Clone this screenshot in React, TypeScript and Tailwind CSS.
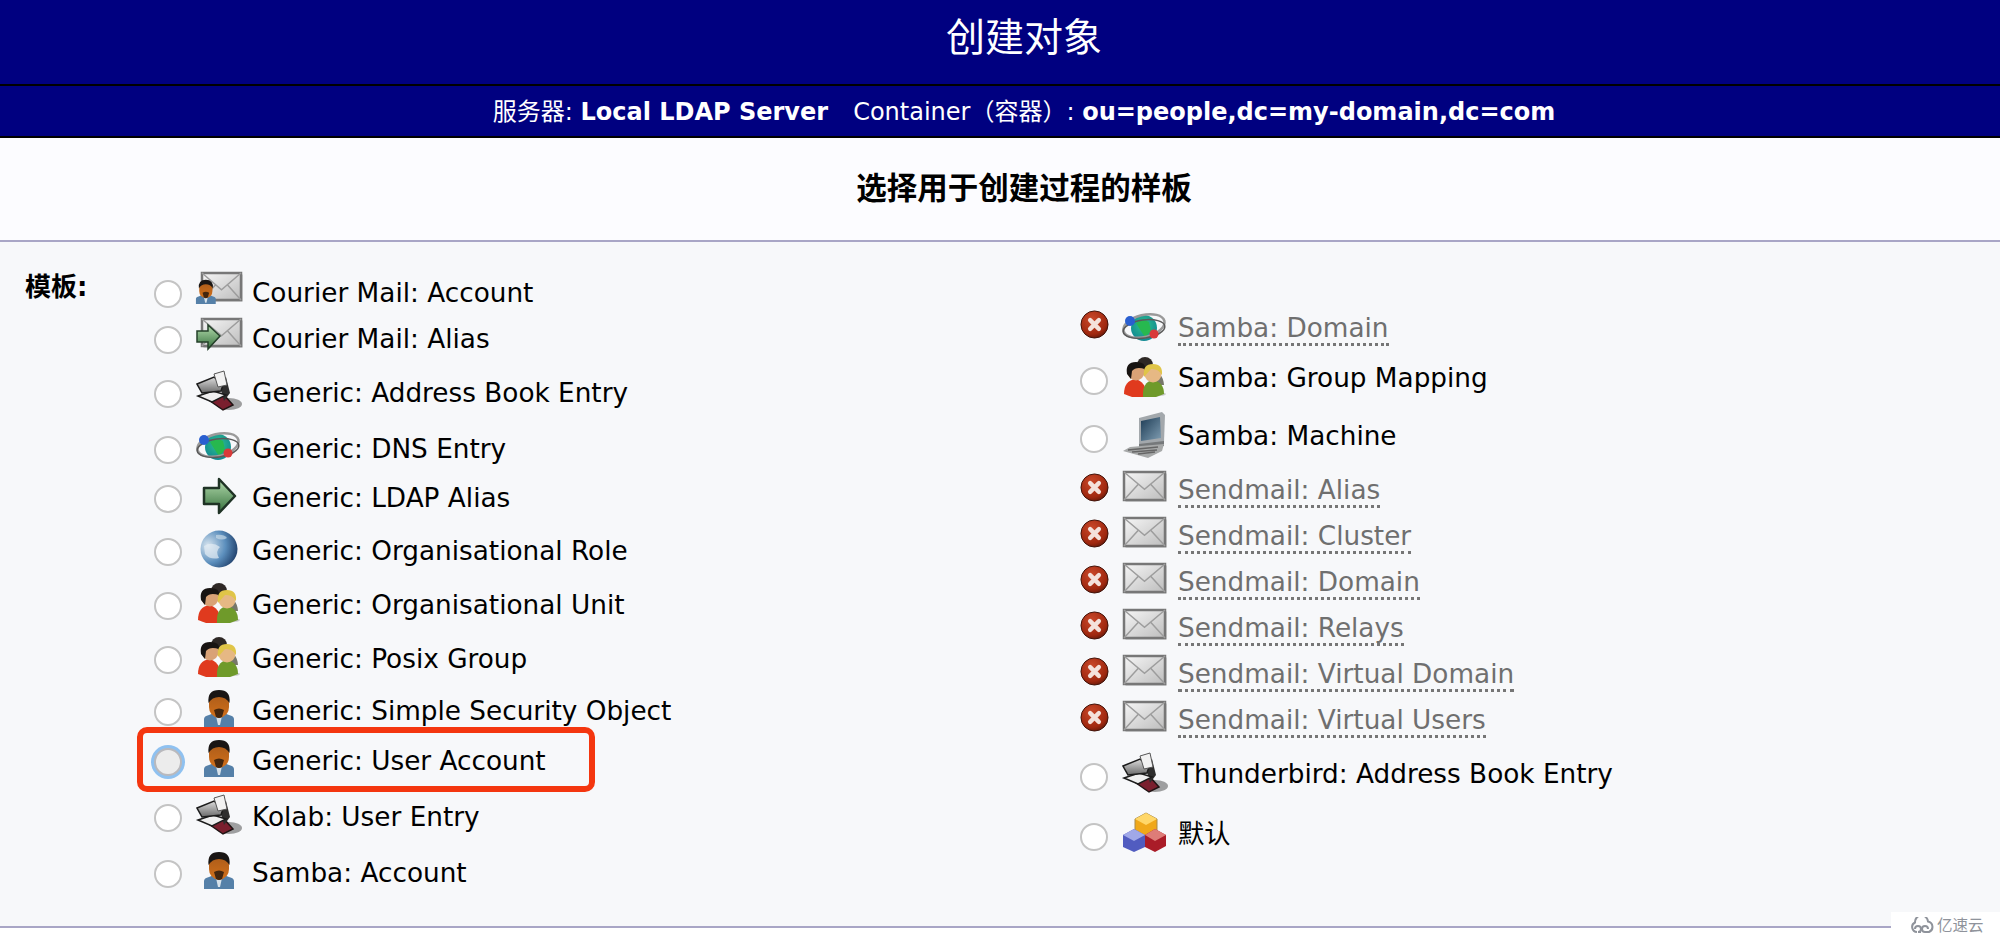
import type React from "react"

const cjk = "font-['Noto_Sans_CJK_SC',sans-serif]"

function SvgDefs() {
  return (
    <svg className="absolute h-0 w-0" aria-hidden="true">
      <defs>
        <linearGradient id="mailFill" x1="0" y1="0" x2="1" y2="1">
          <stop offset="0" stopColor="#f6f6f6" />
          <stop offset="1" stopColor="#bdbdbd" />
        </linearGradient>
        <linearGradient id="arrowFill" x1="0" y1="0" x2="0" y2="1">
          <stop offset="0" stopColor="#b4dcae" />
          <stop offset="1" stopColor="#35703c" />
        </linearGradient>
        <radialGradient id="errFill" cx="0.4" cy="0.3" r="0.8">
          <stop offset="0" stopColor="#c9482a" />
          <stop offset="0.7" stopColor="#a0280f" />
          <stop offset="1" stopColor="#4f1509" />
        </radialGradient>
        <radialGradient id="earthFill" cx="0.2" cy="0.4" r="0.95">
          <stop offset="0" stopColor="#d5e3ee" />
          <stop offset="0.5" stopColor="#5c8fbd" />
          <stop offset="1" stopColor="#0c2650" />
        </radialGradient>
        <radialGradient id="netFill" cx="0.5" cy="0.4" r="0.7">
          <stop offset="0" stopColor="#2fc48a" />
          <stop offset="1" stopColor="#0c7f95" />
        </radialGradient>
        <linearGradient id="faceFill" x1="0" y1="0" x2="0" y2="1">
          <stop offset="0" stopColor="#a85a1a" />
          <stop offset="1" stopColor="#d2701a" />
        </linearGradient>
        <linearGradient id="screenFill" x1="0" y1="0" x2="1" y2="1">
          <stop offset="0" stopColor="#1e3c55" />
          <stop offset="1" stopColor="#7f9db2" />
        </linearGradient>
        <linearGradient id="trayFill" x1="0" y1="0" x2="0" y2="1">
          <stop offset="0" stopColor="#dcdcdc" />
          <stop offset="1" stopColor="#6a6a6a" />
        </linearGradient>
      </defs>
    </svg>
  )
}

function Envelope({ x, y, w, h }: { x: number; y: number; w: number; h: number }) {
  return (
    <g>
      <rect x={x + 1.5} y={y + 1.5} width={w} height={h} fill="#8a8a8a" opacity="0.7" />
      <rect x={x} y={y} width={w} height={h} fill="url(#mailFill)" stroke="#777" strokeWidth="2.5" />
      <path
        d={`M${x} ${y} L${x + w / 2} ${y + h * 0.62} L${x + w} ${y} M${x} ${y + h} L${x + w * 0.36} ${y + h * 0.42} M${x + w} ${y + h} L${x + w * 0.64} ${y + h * 0.42}`}
        fill="none"
        stroke="#9d9d9d"
        strokeWidth="1.5"
      />
    </g>
  )
}

function Person({ scale = 1, dx = 0, dy = 0 }: { scale?: number; dx?: number; dy?: number }) {
  return (
    <g transform={`translate(${dx} ${dy}) scale(${scale})`}>
      <path d="M9 38 V30 Q9 27 14 26 L19 24 H29 L34 26 Q39 27 39 30 V38 Z" fill="#5580a8" />
      <path d="M21 27 H27 L25 36 H23 Z" fill="#d8e2ea" />
      <path d="M14 13 Q14 3 24 3 Q34 3 34 13 V18 Q34 27 24 29 Q14 27 14 18 Z" fill="url(#faceFill)" />
      <path d="M13.5 14 Q12 1 24 1 Q36 1 34.5 14 Q31 8 24 8 Q17 8 13.5 14 Z" fill="#1a1614" />
      <path d="M19 21 Q24 18 29 21 L27 28 Q24 30 21 28 Z" fill="#43260f" />
    </g>
  )
}

function Shape({ children, tall }: { children: React.ReactNode; tall?: boolean }) {
  return (
    <svg
      viewBox={tall ? "0 -3 48 46" : "0 0 48 40"}
      className={tall ? "-my-[3px] h-[46px] w-12 overflow-visible blur-[0.5px]" : "h-10 w-12 overflow-visible blur-[0.5px]"}
    >
      {children}
    </svg>
  )
}

function MailIcon() {
  return (
    <Shape>
      <Envelope x={2} y={3} w={41} h={28} />
    </Shape>
  )
}

function MailPersonIcon() {
  return (
    <Shape>
      <Envelope x={6} y={2} w={39} h={27} />
      <Person scale={0.66} dx={-6} dy={8} />
    </Shape>
  )
}

function MailArrowIcon() {
  return (
    <Shape>
      <Envelope x={6} y={2} w={39} h={27} />
      <path d="M1 14 H12 V8 L24 19 L12 32 V25 H1 Z" fill="url(#arrowFill)" stroke="#24402a" strokeWidth="1.5" />
    </Shape>
  )
}

function PersonIcon() {
  return (
    <Shape>
      <Person dx={-1} />
    </Shape>
  )
}

function ArrowIcon() {
  return (
    <Shape>
      <path d="M8 12 H23 V3 L39 20 L23 37 V28 H8 Z" fill="url(#arrowFill)" stroke="#1f3325" strokeWidth="2.5" strokeLinejoin="round" />
    </Shape>
  )
}

function BookIcon() {
  return (
    <Shape>
      <ellipse cx="33" cy="33" rx="13" ry="6" fill="#555" opacity="0.55" />
      <path d="M14 30 L28 24 L37 34 L27 39 Z" fill="#7a1f2e" stroke="#201414" strokeWidth="1.5" />
      <path d="M22 8 L30 6 L34 22 L28 30 Z" fill="#2e2e2e" />
      <path d="M2 25 L17 20 L30 24 L16 31 Z" fill="#efefef" stroke="#1c1c1c" strokeWidth="1.5" />
      <path d="M1 13 L18 6 L27 14 L25 20 L6 22 Z" fill="url(#trayFill)" stroke="#1c1c1c" strokeWidth="1.5" />
      <path d="M18 3 L28 0 L31 14 L22 16 Z" fill="#f2f2f2" stroke="#555" />
    </Shape>
  )
}

function NetIcon() {
  return (
    <Shape>
      <circle cx="22" cy="20" r="13" fill="url(#netFill)" />
      <path d="M14 15 Q21 10 27 14 L29 23 L23 29 L19 23 Z" fill="#27b84f" />
      <ellipse cx="22" cy="18" rx="21" ry="11" fill="none" stroke="#9a9a9a" strokeWidth="2.5" transform="rotate(-14 22 18)" />
      <ellipse cx="22" cy="21" rx="21" ry="9" fill="none" stroke="#5a5a5a" strokeWidth="1.5" transform="rotate(-8 22 21)" />
      <circle cx="8" cy="13" r="5" fill="#2a5fd0" />
      <circle cx="32" cy="26" r="4.5" fill="#d93a3a" />
    </Shape>
  )
}

function GlobeIcon() {
  return (
    <Shape>
      <circle cx="23" cy="20" r="18.5" fill="url(#earthFill)" />
      <path d="M8 17 Q16 12 24 18 Q19 22 23 29 Q14 31 9 25 Z" fill="#e4edf4" opacity="0.7" />
      <path d="M20 6 Q28 5 31 9 Q26 12 20 9 Z" fill="#c6d8e6" opacity="0.7" />
    </Shape>
  )
}

function GroupIcon() {
  return (
    <Shape>
      <ellipse cx="24" cy="37" rx="20" ry="3" fill="#888" opacity="0.4" />
      <path d="M27 12 Q41 14 42 28 H28 Z" fill="#77776a" />
      <circle cx="23" cy="8" r="8" fill="#2e2825" />
      <path d="M2 37 Q2 24 13 22 Q24 24 25 40 L10 40 Z" fill="#e03a1e" />
      <circle cx="14" cy="15" r="8.5" fill="#d9a276" />
      <path d="M5 17 Q3 5 14 5 Q24 5 23 12 Q14 9 10 14 L9 22 Z" fill="#181412" />
      <path d="M21 40 Q20 25 31 23 Q42 25 42 37 L34 40 Z" fill="#6f9a2a" />
      <circle cx="31" cy="17" r="8.5" fill="#e6b884" />
      <path d="M22 20 Q20 7 31 7 Q41 7 40 18 Q36 11 29 12 Z" fill="#e0c548" />
    </Shape>
  )
}

function ComputerIcon() {
  return (
    <Shape tall>
      <path d="M17 3 L40 -3 L43 0 L42 27 L17 30 Z" fill="#a3a8ac" />
      <path d="M19 6 L38 2 L39 23 L19 26 Z" fill="url(#screenFill)" />
      <path d="M17 29 L42 26 L42 31 L17 34 Z" fill="#76797b" />
      <path d="M8 32 L42 29 L40 36 L26 43 L1 36 Z" fill="#a7a9a9" />
      <path d="M6 35 L36 32 M10 37 L35 35 M16 39 L33 37" stroke="#666" strokeWidth="1.5" />
    </Shape>
  )
}

function BoxesIcon() {
  return (
    <Shape>
      <path d="M24 0 L35 6 V18 L24 24 L13 18 V6 Z" fill="#f0a81a" stroke="#a88b4a" />
      <path d="M24 0 L35 6 L24 12 L13 6 Z" fill="#ffd769" />
      <path d="M12 16 L23 22 V34 L12 39 L1 34 V22 Z" fill="#515cc0" />
      <path d="M12 16 L23 22 L12 28 L1 22 Z" fill="#a0a8e8" />
      <path d="M33 16 L44 22 V33 L33 39 L23 34 V22 Z" fill="#aa1c28" />
      <path d="M33 16 L44 22 L33 28 L23 22 Z" fill="#de7c78" />
    </Shape>
  )
}

function ErrorIcon() {
  return (
    <svg viewBox="0 0 30 30" className="h-[29px] w-[29px]">
      <circle cx="15" cy="15" r="14" fill="url(#errFill)" stroke="#3f1208" strokeWidth="1" />
      <path d="M10.5 10.5 L19.5 19.5 M19.5 10.5 L10.5 19.5" stroke="#f4e2dc" strokeWidth="4.5" strokeLinecap="round" />
    </svg>
  )
}

function Radio({ focused }: { focused?: boolean }) {
  return (
    <input
      type="radio"
      readOnly
      className={
        focused
          ? "ml-[2px] mt-[4px] h-7 w-7 shrink-0 appearance-none rounded-full border-2 border-[#b9b9bd] bg-[#ececec] shadow-[0_0_0_3px_#8fc1f0]"
          : "ml-[2px] mt-[4px] h-7 w-7 shrink-0 appearance-none rounded-full border-2 border-[#c4c4c4] bg-white"
      }
    />
  )
}

function Row({
  h,
  icon,
  label,
  disabled,
  focused,
  nudge,
}: {
  h: string
  icon: React.ReactNode
  label: React.ReactNode
  disabled?: boolean
  focused?: boolean
  nudge?: boolean
}) {
  return (
    <div className={`relative flex items-center ${h}`}>
      <div className="flex w-[34px] shrink-0 items-center">
        {disabled ? (
          <span className="-mt-[8px] ml-[2px]">
            <ErrorIcon />
          </span>
        ) : (
          <Radio focused={focused} />
        )}
      </div>
      <div className={nudge ? "ml-[10px] -mt-[2px] w-12 shrink-0" : "ml-[10px] -mt-[4px] w-12 shrink-0"}>{icon}</div>
      {disabled ? (
        <span
          className={
            nudge
              ? "ml-[8px] mt-[3px] border-b-[3px] border-dotted border-[#767676] leading-[29px] text-[#6f6f6f]"
              : "ml-[8px] mt-[1px] border-b-[3px] border-dotted border-[#767676] leading-[29px] text-[#6f6f6f]"
          }
        >
          {label}
        </span>
      ) : (
        <span className={nudge ? "ml-[8px] mt-[3px] text-black" : "ml-[8px] text-black"}>{label}</span>
      )}
      {focused && (
        <div className="absolute -left-[15px] top-[-6px] h-[65px] w-[458px] rounded-[10px] border-[6px] border-[#f4360f]" />
      )}
    </div>
  )
}

export default function App() {
  return (
    <div className="relative h-[938px] w-full overflow-hidden bg-white font-['DejaVu_Sans','Noto_Sans_CJK_SC',sans-serif] text-[26.3px]">
      <SvgDefs />
      <div className="flex h-[86px] items-start justify-center border-b-2 border-black bg-[#000080] pl-[48px] pt-[8px]">
        <h1 className={`${cjk} text-[39px] leading-[52px] font-normal text-white`}>创建对象</h1>
      </div>
      <div className="flex h-[52px] items-center justify-center border-b-2 border-black bg-[#000080] pl-[48px] pt-[2px] text-[24px] whitespace-pre text-white">
        <span>服务器: </span>
        <strong className="font-bold">Local LDAP Server</strong>
        <span className="ml-[25px]">Container（容器）: </span>
        <strong className="font-bold">ou=people,dc=my-domain,dc=com</strong>
      </div>
      <div className="flex h-[104px] items-center justify-center border-b-2 border-[#a9a6c6] bg-[#fcfcff] pl-[48px]">
        <h2 className={`${cjk} -mt-[4px] text-[30.5px] font-bold text-black`}>选择用于创建过程的样板</h2>
      </div>
      <div className="flex h-[686px] items-center border-b-2 border-[#a9a6c6] bg-[#f7f8fa]">
        <div className="w-[152px] self-start pl-[25px] pt-[26px] text-[26px] font-bold">模板:</div>
        <div className="w-[926px]">
          <Row h="h-[46px]" icon={<MailPersonIcon />} label="Courier Mail: Account" nudge />
          <Row h="h-[46px]" icon={<MailArrowIcon />} label="Courier Mail: Alias" nudge />
          <Row h="h-[62px]" icon={<BookIcon />} label="Generic: Address Book Entry" nudge />
          <Row h="h-[50px]" icon={<NetIcon />} label="Generic: DNS Entry" nudge />
          <Row h="h-[48px]" icon={<ArrowIcon />} label="Generic: LDAP Alias" nudge />
          <Row h="h-[58px]" icon={<GlobeIcon />} label="Generic: Organisational Role" nudge />
          <Row h="h-[50px]" icon={<GroupIcon />} label="Generic: Organisational Unit" nudge />
          <Row h="h-[58px]" icon={<GroupIcon />} label="Generic: Posix Group" nudge />
          <Row h="h-[46px]" icon={<PersonIcon />} label="Generic: Simple Security Object" nudge />
          <Row h="h-[54px]" icon={<PersonIcon />} label="Generic: User Account" focused nudge />
          <Row h="h-[58px]" icon={<BookIcon />} label="Kolab: User Entry" nudge />
          <Row h="h-[54px]" icon={<PersonIcon />} label="Samba: Account" nudge />
        </div>
        <div className="flex-1">
          <Row h="h-[51px]" icon={<NetIcon />} label="Samba: Domain" disabled nudge />
          <Row h="h-[50px]" icon={<GroupIcon />} label="Samba: Group Mapping" />
          <Row h="h-[65px]" icon={<ComputerIcon />} label="Samba: Machine" />
          <Row h="h-[44px]" icon={<MailIcon />} label="Sendmail: Alias" disabled />
          <Row h="h-[48px]" icon={<MailIcon />} label="Sendmail: Cluster" disabled />
          <Row h="h-[44px]" icon={<MailIcon />} label="Sendmail: Domain" disabled />
          <Row h="h-[48px]" icon={<MailIcon />} label="Sendmail: Relays" disabled />
          <Row h="h-[44px]" icon={<MailIcon />} label="Sendmail: Virtual Domain" disabled />
          <Row h="h-[48px]" icon={<MailIcon />} label="Sendmail: Virtual Users" disabled />
          <Row h="h-[60px]" icon={<BookIcon />} label="Thunderbird: Address Book Entry" />
          <Row h="h-[60px]" icon={<BoxesIcon />} label="默认" />
        </div>
      </div>
      <div className="absolute bottom-0 right-0 flex h-[26px] w-[109px] items-center gap-[3px] bg-white pl-[19px]">
        <svg viewBox="0 0 24 16" className="h-[16px] w-[24px] shrink-0" fill="none" stroke="#8f939b" strokeWidth="2">
          <path d="M7 15 A5 5 0 0 1 5 5.5 A6.5 6.5 0 0 1 18 4.5 A5.5 5.5 0 0 1 19 15 H15 A3 3 0 1 1 18 12" />
          <path d="M5 12 A3 3 0 1 1 8 15 H11" />
        </svg>
        <span className={`${cjk} text-[15.5px] leading-none text-[#8f939b]`}>亿速云</span>
      </div>
    </div>
  )
}
